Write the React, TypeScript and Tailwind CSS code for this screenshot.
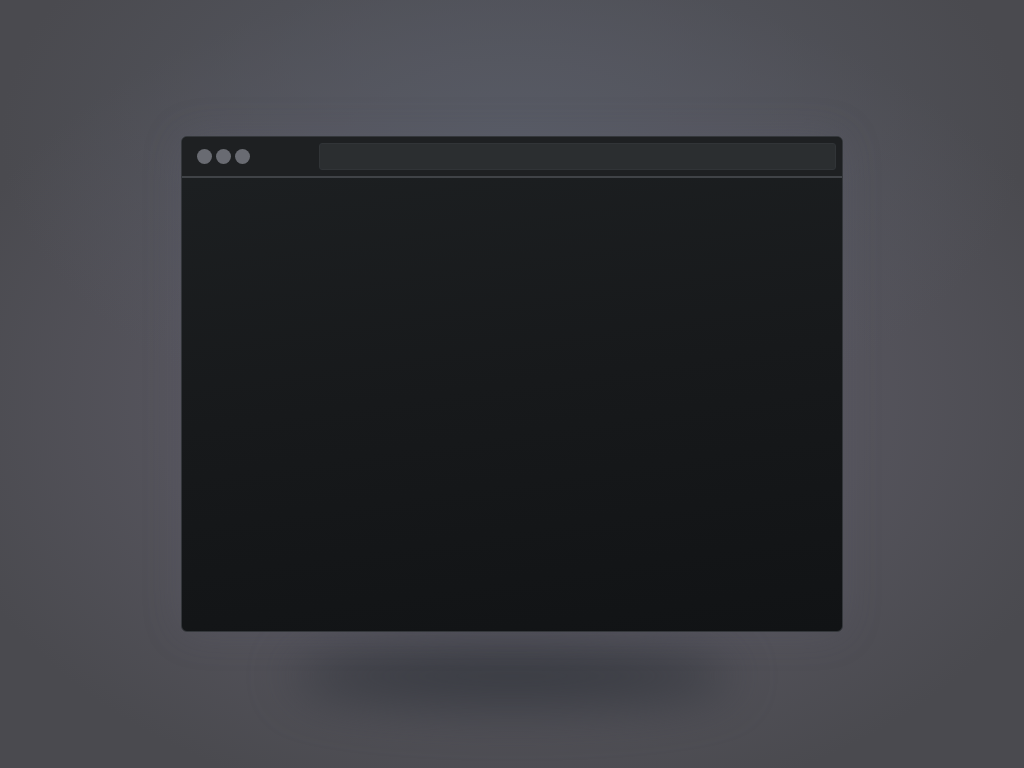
import React from 'react';

// Fenêtre de navigateur vide, posée sur un fond gris avec ombre portée
export default function App() {
  return (
    <div className="relative w-full h-[768px] overflow-hidden flex items-center justify-center bg-[#4c4c52] bg-[radial-gradient(ellipse_50%_40%_at_50%_18%,#575a64_0%,rgba(87,90,100,0)_100%),radial-gradient(ellipse_58%_55%_at_50%_52%,#5a5762_0%,#54535b_60%,#4a4a4f_100%)]">
      {/* Ombre au sol */}
      <div className="absolute left-1/2 top-[676px] -translate-x-1/2 -translate-y-1/2 w-[440px] h-[56px] rounded-[50%] bg-[#33363d] opacity-90 blur-[26px]" />

      <div className="relative w-[662px] h-[496px] rounded-[6px] border border-[#34373b] bg-[linear-gradient(172deg,#1d2022_0%,#17191b_50%,#111315_100%)] flex flex-col overflow-hidden shadow-[0_0_40px_rgba(100,98,120,0.2)]">
        {/* Barre de titre */}
        <div className="h-[39px] flex items-center bg-[#1e2022] pl-[15px] pr-[6px] gap-[69px]">
          <div className="flex items-center gap-[4px]">
            <span className="w-[15px] h-[15px] rounded-full bg-[#696b72]" />
            <span className="w-[15px] h-[15px] rounded-full bg-[#696b72]" />
            <span className="w-[15px] h-[15px] rounded-full bg-[#696b72]" />
          </div>
          <div className="flex-1 h-[27px] rounded-[3px] bg-[#2b2e30] border border-[#313437]" />
        </div>
        <div className="h-[2px] bg-[#404347]" />
        <div className="flex-1" />
      </div>
    </div>
  );
}
